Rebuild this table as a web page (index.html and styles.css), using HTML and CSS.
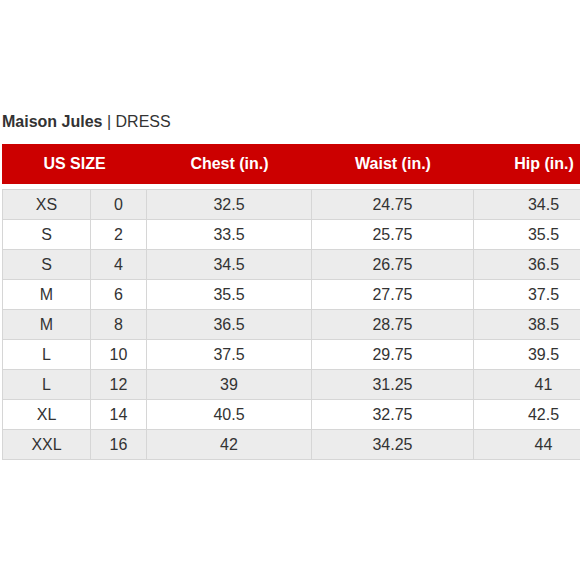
FILE: index.html
```html
<!DOCTYPE html>
<html>
<head>
<meta charset="utf-8">
<link rel="stylesheet" href="styles.css">
</head>
<body>
<div class="page">
  <h1 class="title"><b>Maison Jules</b> | DRESS</h1>
  <div class="chart">
    <div class="head">
      <div>US SIZE</div>
      <div>Chest (in.)</div>
      <div>Waist (in.)</div>
      <div>Hip (in.)</div>
    </div>
    <div class="rows">
      <div class="row alt"><div>XS</div><div>0</div><div>32.5</div><div>24.75</div><div>34.5</div></div>
      <div class="row"><div>S</div><div>2</div><div>33.5</div><div>25.75</div><div>35.5</div></div>
      <div class="row alt"><div>S</div><div>4</div><div>34.5</div><div>26.75</div><div>36.5</div></div>
      <div class="row"><div>M</div><div>6</div><div>35.5</div><div>27.75</div><div>37.5</div></div>
      <div class="row alt"><div>M</div><div>8</div><div>36.5</div><div>28.75</div><div>38.5</div></div>
      <div class="row"><div>L</div><div>10</div><div>37.5</div><div>29.75</div><div>39.5</div></div>
      <div class="row alt"><div>L</div><div>12</div><div>39</div><div>31.25</div><div>41</div></div>
      <div class="row"><div>XL</div><div>14</div><div>40.5</div><div>32.75</div><div>42.5</div></div>
      <div class="row alt"><div>XXL</div><div>16</div><div>42</div><div>34.25</div><div>44</div></div>
    </div>
  </div>
</div>
</body>
</html>
```
FILE: styles.css
```css
html, body {
  margin: 0;
  padding: 0;
  background: #ffffff;
}
.page {
  width: 580px;
  height: 580px;
  overflow: hidden;
  padding-top: 112px;
  box-sizing: border-box;
  font-family: "Liberation Sans", Arial, sans-serif;
  color: #333333;
}
.title {
  margin: 0 0 12px 2px;
  font-size: 16px;
  line-height: 20px;
  font-weight: normal;
  color: #333333;
  white-space: nowrap;
}
.title b {
  font-weight: bold;
}
.chart {
  margin-left: 2px;
  width: 612px;
}
.head {
  display: grid;
  grid-template-columns: 145px 165px 162px 140px;
  height: 40px;
  background: #cc0000;
  align-items: center;
  color: #ffffff;
  font-weight: bold;
  font-size: 16px;
  text-align: center;
}
.rows {
  margin-top: 5px;
  border-top: 1px solid #d6d6d6;
  border-left: 1px solid #d6d6d6;
}
.row {
  display: grid;
  grid-template-columns: 88px 56px 165px 162px 140px;
  height: 30px;
  background: #ffffff;
  font-size: 16px;
  text-align: center;
}
.row.alt {
  background: #ececec;
}
.row > div {
  border-right: 1px solid #d6d6d6;
  border-bottom: 1px solid #d6d6d6;
  line-height: 29px;
}
```
